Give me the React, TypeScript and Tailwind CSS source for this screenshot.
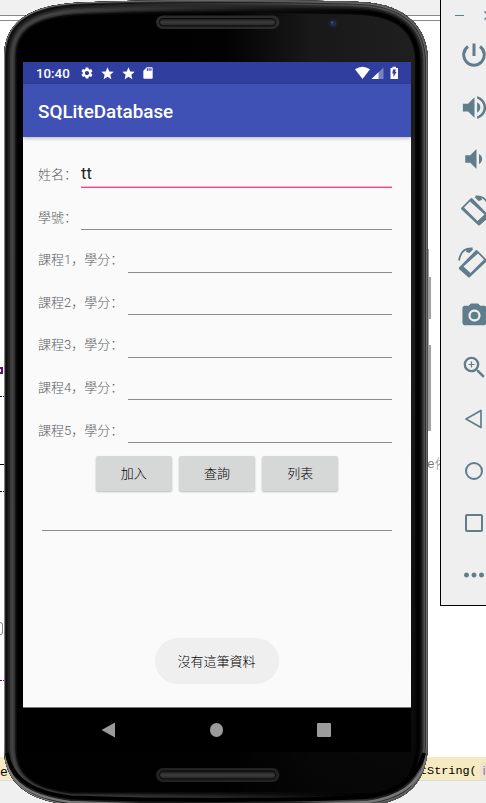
import React from "react";
import {
  MdPowerSettingsNew,
  MdVolumeUp,
  MdVolumeDown,
  MdPhotoCamera,
  MdZoomIn,
  MdSettings,
  MdStar,
  MdSdCard,
  MdMoreHoriz,
} from "react-icons/md";

const courses = [1, 2, 3, 4, 5];

const BODY =
  "M4 55C5 25 25 7 72 3Q125 0 216 0Q307 0 360 2C406 4 427 27 428 60V748C425 783 408 801 372 805H70C26 800 5 782 4 750Z";

// Bands of the bevelled rim, from the innermost to the outermost.
const bands = [
  { d: 13, left: "#0b0b0b", right: "#070707" },
  { d: 11.5, left: "#252525", right: "#000" },
  { d: 10.5, left: "#3a3a3a", right: "#000" },
  { d: 9, left: "#454545", right: "#050505" },
  { d: 7.5, left: "#383838", right: "#191919" },
  { d: 6, left: "#262626", right: "#2b2b2b" },
  { d: 4.5, left: "#171717", right: "#505050" },
  { d: 3, left: "#0b0b0b", right: "#303030" },
  { d: 2, left: "#222", right: "#6e6e6e" },
  { d: 1, left: "#808080", right: "#4c4c4c" },
];

function Shell() {
  return (
    <svg className="absolute left-0 top-0" width="440" height="803" viewBox="0 0 440 803">
      <defs>
        <clipPath id="body">
          <path d={BODY} />
        </clipPath>
        {bands.map((b, i) => (
          <linearGradient key={i} id={`band${i}`} gradientUnits="userSpaceOnUse" x1="60" y1="0" x2="370" y2="0">
            <stop offset="0" stopColor={b.left} />
            <stop offset="1" stopColor={b.right} />
          </linearGradient>
        ))}
        <linearGradient id="glass" x1="0" y1="0" x2="1" y2="0">
          <stop offset="0" stopColor="#000" />
          <stop offset="0.52" stopColor="#020202" />
          <stop offset="0.72" stopColor="#181818" />
          <stop offset="1" stopColor="#202020" />
        </linearGradient>
        <linearGradient id="fade" x1="0" y1="0" x2="0" y2="1">
          <stop offset="0" stopColor="#000" stopOpacity="0" />
          <stop offset="0.45" stopColor="#000" stopOpacity="0.1" />
          <stop offset="1" stopColor="#000" stopOpacity="0.8" />
        </linearGradient>
        <linearGradient id="slot" x1="0" y1="0" x2="0" y2="1">
          <stop offset="0" stopColor="#181818" />
          <stop offset="0.5" stopColor="#3c3c3c" />
          <stop offset="1" stopColor="#222" />
        </linearGradient>
      </defs>
      <path d="M427 249h2v28h2v42h-2v26h2v86h-4z" fill="#a0a0a0" />
      <path d={BODY} fill="url(#glass)" />
      <path d={BODY} fill="url(#fade)" />
      <g clipPath="url(#body)" fill="none">
        {bands.map((b, i) => (
          <path key={i} d={BODY} stroke={`url(#band${i})`} strokeWidth={b.d * 2} />
        ))}
        <path
          d="M5 757C9 784 32 797 70 802Q140 805 216 805Q310 805 368 802C402 797 421 782 427 757"
          stroke="#777"
          strokeWidth="2.500"
        />
        <path
          d="M7 753C11 780 34 793 71 797.500Q140 800 216 800Q310 800 366 797C398 792 418 778 424 753"
          stroke="#000"
          strokeWidth="4"
        />
      </g>
      <rect x="156" y="15.500" width="123.500" height="13.500" rx="6.750" fill="#2b2b2b" />
      <rect x="159.500" y="18.500" width="116" height="7.500" rx="3.750" fill="url(#slot)" stroke="#090909" />
      <rect x="156" y="768" width="123.500" height="14" rx="7" fill="#222" />
      <rect x="159.500" y="771" width="116" height="8" rx="4" fill="url(#slot)" stroke="#090909" />
      <circle cx="333" cy="23.500" r="5" fill="#1d1e28" />
      <circle cx="333" cy="23.500" r="3" fill="#262c50" />
      <circle cx="332" cy="22.500" r="1" fill="#4c5580" />
    </svg>
  );
}

function StatusBar() {
  return (
    <div className="flex h-[22px] shrink-0 items-center bg-[#303f9f] pl-[13px] pr-[12px] text-white">
      <span className="w-[43.500px] pt-px text-[13.3px] font-medium leading-none">10:40</span>
      <MdSettings size={14} />
      <MdStar size={15} className="ml-[6px]" />
      <MdStar size={15} className="ml-[6px]" />
      <MdSdCard size={14} className="ml-[5.500px]" />
      <svg className="ml-auto" width="44" height="14" viewBox="0 0 44 14">
        <path d="M0 3.200Q7.500-1.800 15 3.200L7.500 13Z" fill="#fff" />
        <path d="M16.500 13L28.500 1.500V13Z" fill="#fff" opacity=".35" />
        <path d="M16.500 13L23.500 6.300V13Z" fill="#fff" />
        <path d="M35.500 2h2V.8h3.500V2h2v11h-7.500Z" fill="#fff" />
        <path d="M38 3.500h3l-.8 2.500h1.300L38.500 11V7.500h-1.200Z" fill="#303f9f" />
      </svg>
    </div>
  );
}

function Field({ label, value, gap }: { label: string; value?: string; gap: string }) {
  return (
    <div className="flex h-[42.6px] items-center">
      <label className="shrink-0 whitespace-pre text-[13px] font-light leading-none text-[#606060]">{label}</label>
      <div className={`mb-[2px] mr-[4px] flex h-[28px] grow flex-col ${gap}`}>
        <div className="grow pt-[3px] text-[16.500px] leading-[24px] text-[#212121]">{value}</div>
        {value ? (
          <div className="h-[2px] shrink-0 border-t border-[#ffb3cb] bg-[#ff4081]" />
        ) : (
          <div className="h-px shrink-0 bg-[#8c8c8c]" />
        )}
      </div>
    </div>
  );
}

function Phone() {
  return (
    <div className="absolute left-0 top-0 h-[803px] w-[440px]">
      <Shell />
      <div className="relative ml-[23px] mt-[62px] flex h-[690px] w-[388px] flex-col bg-[#fafafa]">
        <StatusBar />
        <div className="flex h-[53px] shrink-0 items-center bg-[#3f51b5] pl-[15px] pt-[3px] text-[18.850px] font-medium text-white shadow-[0_1px_4px_rgba(0,0,0,0.3)]">
          SQLiteDatabase
        </div>
        <main className="flex grow flex-col pl-[15px] pr-[15px] pt-[16.200px]">
          <Field label="姓名：" value="tt" gap="ml-[4px]" />
          <Field label="學號：" gap="ml-[4px]" />
          {courses.map((n) => (
            <Field key={n} label={`課程${n}，學分：`} gap="ml-[5px]" />
          ))}
          <div className="mt-[4.600px] flex justify-center gap-[7.200px]">
            {["加入", "查詢", "列表"].map((t) => (
              <button
                key={t}
                className="h-[35px] w-[76px] rounded-[2px] bg-[#d6d7d7] text-[13px] font-light text-black shadow-[0_1px_2px_rgba(0,0,0,0.25)]"
              >
                {t}
              </button>
            ))}
          </div>
          <div className="ml-[4px] mr-[4px] h-[40px] border-b border-[#8c8c8c]" />
          <div className="mb-[23px] mt-auto flex h-[46px] w-[124px] items-center justify-center self-center rounded-full bg-[#efefef] pr-px pt-px text-[13px] font-light text-black">
            沒有這筆資料
          </div>
        </main>
        <div className="flex h-[45px] shrink-0 items-center justify-between border-t border-[#777] bg-black pl-[78px] pr-[80px]">
          <svg width="15" height="16" viewBox="0 0 15 16">
            <path d="M.5 8L14 .5v15Z" fill="#9b9b9b" />
          </svg>
          <div className="size-[13.500px] rounded-full bg-[#9b9b9b]" />
          <div className="size-[14px] rounded-[1px] bg-[#9b9b9b]" />
        </div>
      </div>
    </div>
  );
}

function RotateIcon() {
  return (
    <svg width="32" height="32" viewBox="0 0 32 32" className="shrink-0">
      <path
        fillRule="evenodd"
        fill="#607d8b"
        d="M12.500 3.500Q13.500 2.500 14.500 3.500L31 20.500Q31.500 21.500 30.500 22.500L22 30Q21 31 20 30L3.500 14.500Q2.500 13.500 3.500 12.500ZM12 6.500L6 12.500L19.500 26L26.500 19.500Z"
      />
      <path d="M17.500 1.500Q29 .5 31 13.500" fill="none" stroke="#607d8b" strokeWidth="1.800" />
      <path d="M16.500 2L23 1.500L24 5L20.500 6Z" fill="#607d8b" />
    </svg>
  );
}

function Toolbar() {
  return (
    <aside className="absolute left-[440px] top-0 h-[606px] w-[46px] overflow-hidden border-b border-l border-black bg-[#efefef] text-[#607d8b]">
      <div className="flex h-[29px] items-center gap-[20px] pl-[14px] pt-[2px]">
        <div className="h-px w-[9px] shrink-0 bg-[#607d8b]" />
        <svg width="9" height="9" viewBox="0 0 9 9" className="shrink-0" stroke="#607d8b" strokeWidth="1.500">
          <path d="M.5.500l8 8M8.500.500l-8 8" />
        </svg>
      </div>
      <div className="ml-[13px] flex w-[40px] flex-col [&>*]:flex [&>*]:h-[52px] [&>*]:shrink-0 [&>*]:items-center [&>*]:justify-center">
        <div>
          <svg width="26" height="26" viewBox="0 0 26 26" fill="none" stroke="#607d8b" strokeWidth="3">
            <path d="M13 1.500v12.500M7 4.500A10.300 10.300 0 1 0 19 4.500" />
          </svg>
        </div>
        <div><MdVolumeUp size={31} /></div>
        <div><MdVolumeDown size={30} /></div>
        <div><RotateIcon /></div>
        <div><div className="-scale-x-100"><RotateIcon /></div></div>
        <div><MdPhotoCamera size={29} /></div>
        <div><MdZoomIn size={29} /></div>
        <div>
          <svg width="20" height="20" viewBox="0 0 20 20" fill="none" stroke="#607d8b" strokeWidth="1.700" strokeLinejoin="round">
            <path d="M2 10L17 1.500v17Z" />
          </svg>
        </div>
        <div><div className="size-[18px] rounded-full border-2 border-[#607d8b]" /></div>
        <div><div className="size-[18px] rounded-[2px] border-2 border-[#607d8b]" /></div>
        <div><MdMoreHoriz size={30} /></div>
      </div>
    </aside>
  );
}

function Editor() {
  return (
    <div className="flex h-full flex-col font-['Liberation_Mono','Noto_Sans_CJK_SC',monospace] text-[13px]">
      <div className="h-[16px] border-b border-[#888] bg-[#f0f0f0]" />
      <div className="h-[5px] border-b border-[#888] bg-white" />
      <div className="flex grow justify-between">
        <div className="flex w-[4px] flex-col overflow-hidden">
          <div className="mt-[346px] h-[7px] w-[3px] border-2 border-l-0 border-[#660e7a]" />
          <div className="mt-[22px] w-[4px] border-b border-dotted border-[#000080]" />
          <div className="mt-[67px] h-px bg-black" />
          <div className="mt-[26px] w-[4px] border-b border-dotted border-[#000080]" />
          <div className="mt-[130px] h-[13px] w-[3px] rounded-r-full border border-l-0 border-[#888]" />
          <div className="mt-[45px] w-[4px] border-b border-dotted border-[#660e7a]" />
        </div>
        <div className="flex w-[59px] flex-col pt-[434px]">
          <span className="whitespace-nowrap font-light text-[#777]">e依</span>
        </div>
      </div>
      <div className="flex h-[24px] items-center justify-between border-b border-[#ddd] bg-[#f5eac1] pt-[4px] leading-none">
        <span className="pt-[3px]">e</span>
        <span className="flex w-[66px] items-center gap-[3px] whitespace-nowrap">
          <span className="pt-[3px] text-[11.800px]">tString(</span>
          <span className="h-[18px] w-[10px] shrink-0 rounded-l-[4px] bg-[#ebe3cf] pl-[3px] pt-[2px] font-['Liberation_Sans',sans-serif] text-[13px] text-[#a765a5]">
            i
          </span>
        </span>
      </div>
      <div className="h-[22px] bg-[#f0f0f0]" />
    </div>
  );
}

export default function App() {
  return (
    <div className="relative h-[803px] w-[486px] overflow-hidden bg-white font-[Roboto,'Noto_Sans_CJK_SC',sans-serif]">
      <Editor />
      <Phone />
      <Toolbar />
    </div>
  );
}
